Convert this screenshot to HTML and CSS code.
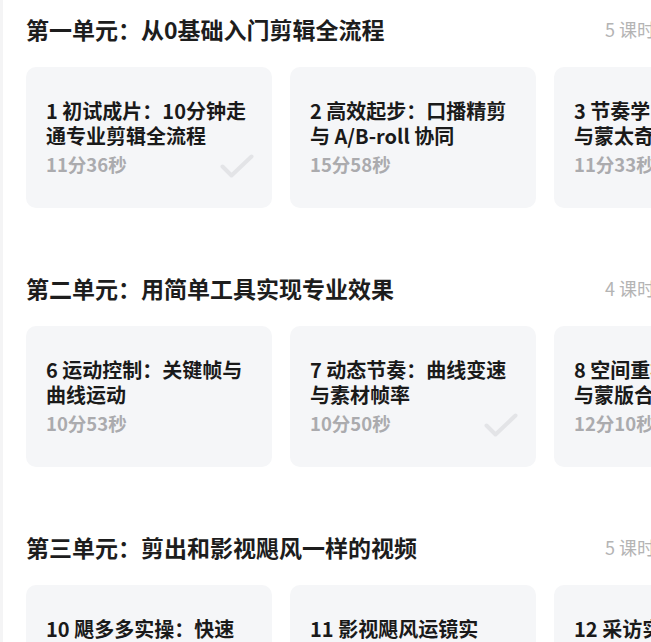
FILE: index.html
```html
<!DOCTYPE html>
<html lang="zh-CN">
<head>
    <meta charset="UTF-8">
    <meta name="viewport" content="width=device-width, initial-scale=1.0">
    <title>课程目录</title>
    <link rel="stylesheet" href="styles.css">
</head>
<body>
    <div class="catalog">
        <section class="unit">
            <div class="unit-head">
                <h2 class="unit-title">第一单元：从0基础入门剪辑全流程</h2>
                <span class="unit-count">5 课时</span>
            </div>
            <div class="lessons">
                <div class="lesson done">
                    <p class="lesson-title">1 初试成片：10分钟走通专业剪辑全流程</p>
                    <p class="lesson-time">11分36秒</p>
                    <svg class="check" width="34" height="24" viewBox="0 0 34 24"><path d="M2.5 12.5 L11.5 21.5 L31.5 2.5" /></svg>
                </div>
                <div class="lesson">
                    <p class="lesson-title">2 高效起步：口播精剪与 A/B-roll 协同</p>
                    <p class="lesson-time">15分58秒</p>
                </div>
                <div class="lesson">
                    <p class="lesson-title">3 节奏学问：音乐卡点与蒙太奇</p>
                    <p class="lesson-time">11分33秒</p>
                </div>
            </div>
        </section>

        <section class="unit">
            <div class="unit-head">
                <h2 class="unit-title">第二单元：用简单工具实现专业效果</h2>
                <span class="unit-count">4 课时</span>
            </div>
            <div class="lessons">
                <div class="lesson">
                    <p class="lesson-title">6 运动控制：关键帧与曲线运动</p>
                    <p class="lesson-time">10分53秒</p>
                </div>
                <div class="lesson done">
                    <p class="lesson-title">7 动态节奏：曲线变速与素材帧率</p>
                    <p class="lesson-time">10分50秒</p>
                    <svg class="check" width="34" height="24" viewBox="0 0 34 24"><path d="M2.5 12.5 L11.5 21.5 L31.5 2.5" /></svg>
                </div>
                <div class="lesson">
                    <p class="lesson-title">8 空间重构：分屏特效与蒙版合成</p>
                    <p class="lesson-time">12分10秒</p>
                </div>
            </div>
        </section>

        <section class="unit">
            <div class="unit-head">
                <h2 class="unit-title">第三单元：剪出和影视飓风一样的视频</h2>
                <span class="unit-count">5 课时</span>
            </div>
            <div class="lessons">
                <div class="lesson">
                    <p class="lesson-title">10 飓多多实操：快速上手模板剪辑</p>
                    <p class="lesson-time">9分42秒</p>
                </div>
                <div class="lesson">
                    <p class="lesson-title">11 影视飓风运镜实战：跟拍与环绕</p>
                    <p class="lesson-time">13分05秒</p>
                </div>
                <div class="lesson">
                    <p class="lesson-title">12 采访实录：双机位对话剪辑</p>
                    <p class="lesson-time">11分18秒</p>
                </div>
            </div>
        </section>
    </div>
</body>
</html>
```

FILE: styles.css
```css
body {
    margin: 0;
    background-color: #fff;
    color: #222;
    font-family: "Noto Sans CJK SC", "Noto Sans", sans-serif;
    overflow: hidden;
}
.catalog {
    border-left: 3px solid #f4f4f5;
    padding: 14px 0 0 23px;
    height: 100vh;
    box-sizing: border-box;
}
.unit {
    width: 629px;
    margin-bottom: 65px;
}
.unit-head {
    display: flex;
    justify-content: space-between;
    align-items: center;
    height: 30px;
}
.unit-title {
    margin: 0;
    font-size: 23px;
    font-weight: 700;
    line-height: 30px;
    color: #1d1d1d;
    white-space: nowrap;
}
.unit-count {
    font-size: 18px;
    color: #b4b4b4;
    white-space: nowrap;
}
.lessons {
    display: flex;
    gap: 18px;
    margin-top: 23px;
}
.lesson {
    position: relative;
    flex: 0 0 246px;
    height: 141px;
    padding: 31px 22px 0 20px;
    box-sizing: border-box;
    background-color: #f5f6f8;
    border-radius: 10px;
}
.lesson-title {
    margin: 0;
    font-size: 20px;
    font-weight: 700;
    line-height: 25px;
    color: #1a1a1a;
}
.lesson-time {
    margin: 5px 0 0;
    font-size: 18.5px;
    font-weight: 700;
    line-height: 23px;
    color: #ababae;
}
.check {
    position: absolute;
    right: 18px;
    bottom: 30px;
}
.check path {
    fill: none;
    stroke: #e3e4e7;
    stroke-width: 4;
    stroke-linecap: round;
    stroke-linejoin: round;
}
```
